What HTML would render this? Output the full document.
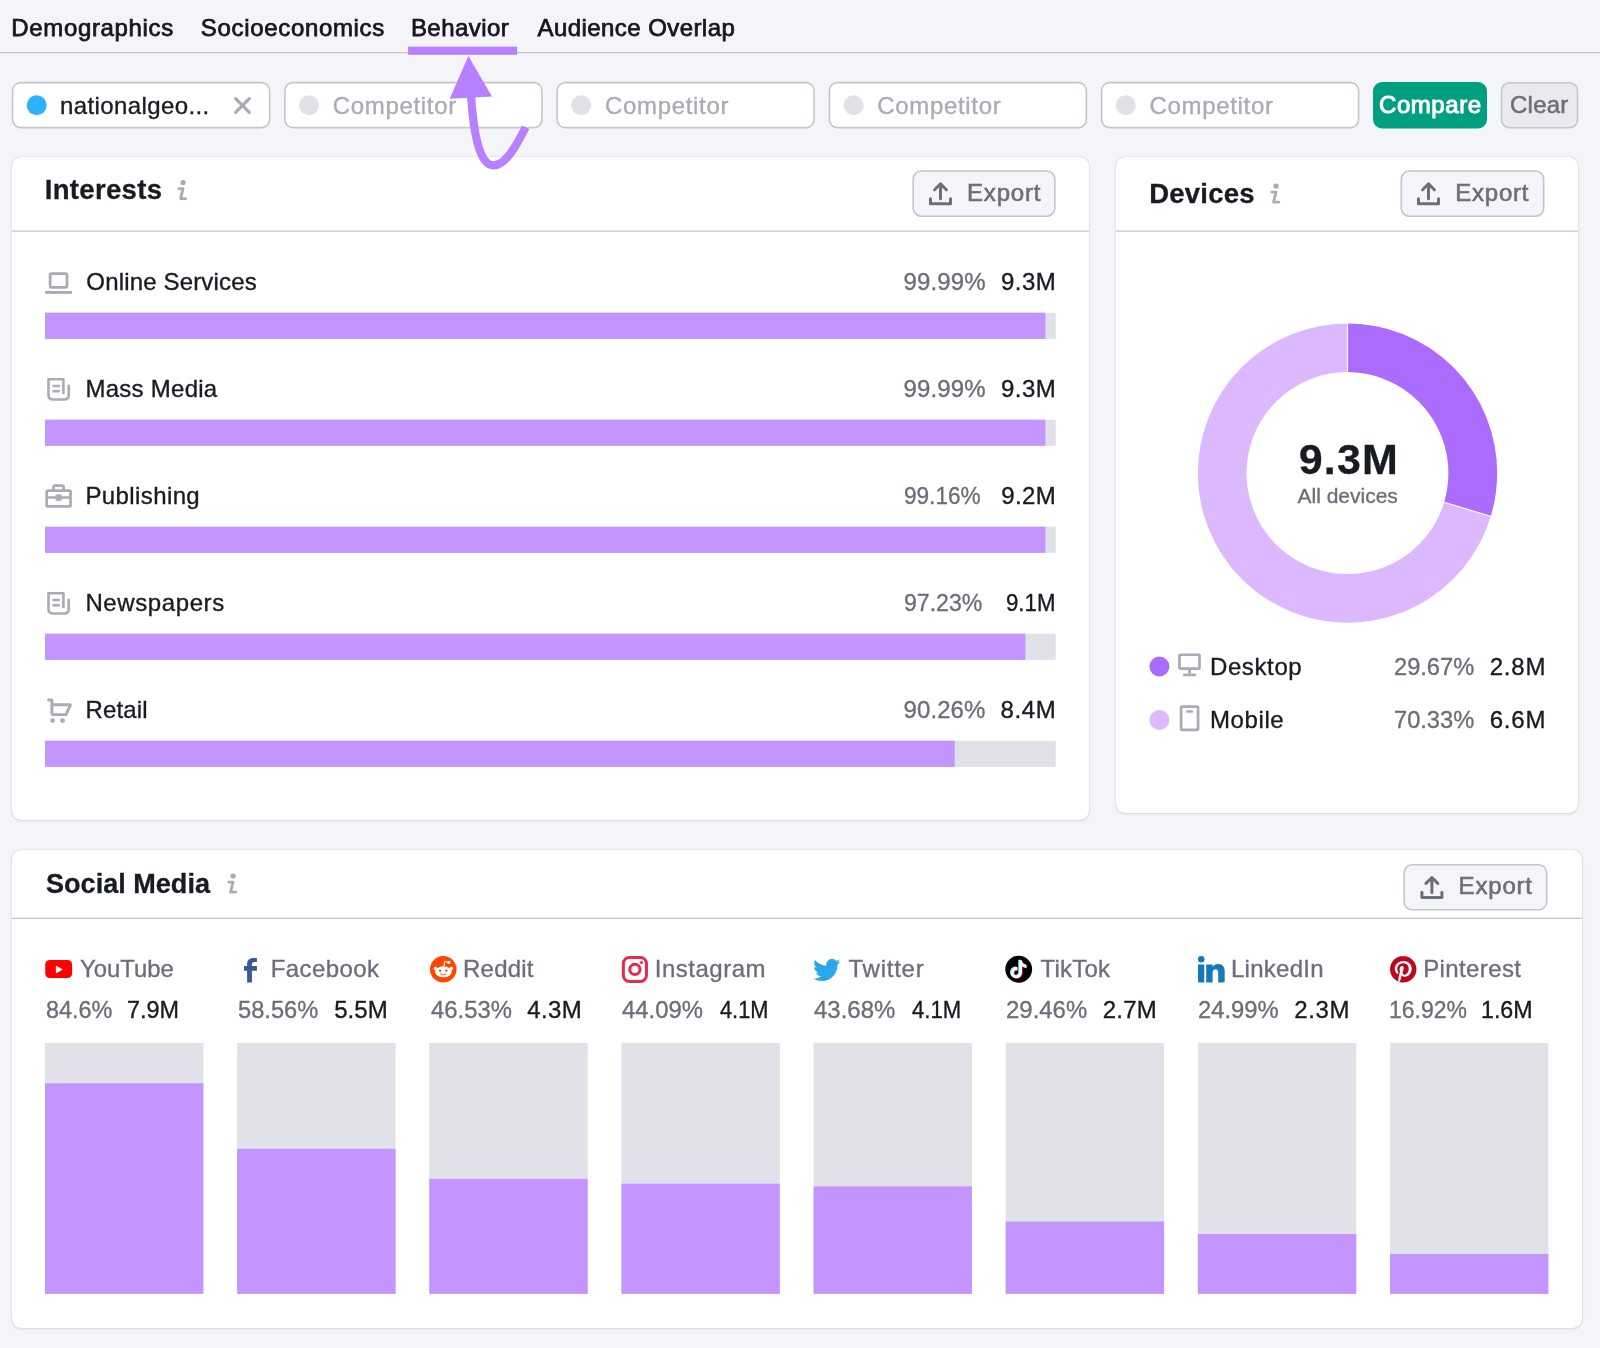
<!DOCTYPE html>
<html lang="en"><head><meta charset="utf-8"><title>Audience Behavior</title>
<style>
html,body{margin:0;padding:0}
body{width:1600px;height:1348px;position:relative;overflow:hidden;background:#f4f5f9;font-family:"Liberation Sans",sans-serif;}
.card{position:absolute;background:#fff;border-radius:9px;box-shadow:0 0 1.5px rgba(25,27,35,.22),0 1px 3px rgba(25,27,35,.10);}
svg{position:absolute;overflow:visible;}
#tx{position:absolute;left:0;top:0;width:1600px;height:1348px;will-change:transform;}
#tx nav,#tx section,#tx div,#tx h2,#tx p{margin:0;padding:0;font:inherit;}
.t{position:absolute;white-space:nowrap;transform-origin:0 50%;}

</style></head>
<body>
<div class="card" style="left:12px;top:157px;width:1077px;height:663px"></div>
<div class="card" style="left:1116px;top:157px;width:462px;height:656px"></div>
<div class="card" style="left:12px;top:850px;width:1570px;height:478px"></div>
<svg width="1600" height="1348" viewBox="0 0 1600 1348" style="left:0;top:0">
<g stroke="#c1c4cd" stroke-width="1.3">
<line x1="0" y1="52.7" x2="1600" y2="52.7"/>
<line x1="12" y1="231.1" x2="1089" y2="231.1"/>
<line x1="1116" y1="231.1" x2="1578" y2="231.1"/>
<line x1="12" y1="918.4" x2="1582" y2="918.4"/>
</g>
<rect x="408.1" y="46.6" width="109" height="8.2" fill="#b880ff"/>
<g fill="#fff" stroke="#c2c5ce" stroke-width="1.55">
<rect x="12.6" y="82.6" width="257" height="45" rx="8"/>
<rect x="284.9" y="82.6" width="257" height="45" rx="8"/>
<rect x="557.1" y="82.6" width="257" height="45" rx="8"/>
<rect x="829.4" y="82.6" width="257" height="45" rx="8"/>
<rect x="1101.6" y="82.6" width="257" height="45" rx="8"/>
</g>
<circle cx="36.7" cy="105.3" r="10" fill="#2bb3ff"/>
<g fill="#e0e1e9">
<circle cx="309" cy="105.3" r="10"/>
<circle cx="581.2" cy="105.3" r="10"/>
<circle cx="853.5" cy="105.3" r="10"/>
<circle cx="1125.7" cy="105.3" r="10"/>
</g>
<rect x="1373" y="82" width="114" height="46.4" rx="9" fill="#009f81"/>
<rect x="1501.5" y="82.7" width="76" height="45" rx="8" fill="#e9eaf0" stroke="#c2c5ce" stroke-width="1.55"/>
<g fill="#f4f5f9" stroke="#c2c5ce" stroke-width="1.55">
<rect x="913.2" y="171" width="141.6" height="45.2" rx="8"/>
<rect x="1401.3" y="171" width="142.4" height="45.2" rx="8"/>
<rect x="1404.15" y="864.8" width="142.5" height="45" rx="8"/>
</g>
</svg>

<svg width="1600" height="1348" viewBox="0 0 1600 1348" style="left:0;top:0">
<rect x="45" y="312.7" width="1010.7" height="26.2" fill="#e0e1e9"/><rect x="45" y="312.7" width="1000.45" height="26.2" fill="#c595ff"/>
<rect x="45" y="419.7" width="1010.7" height="26.2" fill="#e0e1e9"/><rect x="45" y="419.7" width="1000.45" height="26.2" fill="#c595ff"/>
<rect x="45" y="526.7" width="1010.7" height="26.2" fill="#e0e1e9"/><rect x="45" y="526.7" width="1000.45" height="26.2" fill="#c595ff"/>
<rect x="45" y="633.7" width="1010.7" height="26.2" fill="#e0e1e9"/><rect x="45" y="633.7" width="980.35" height="26.2" fill="#c595ff"/>
<rect x="45" y="740.7" width="1010.7" height="26.2" fill="#e0e1e9"/><rect x="45" y="740.7" width="909.75" height="26.2" fill="#c595ff"/>
<rect x="45.00" y="1043" width="158.4" height="250.9" fill="#e0e1e9"/><rect x="45.00" y="1083.25" width="158.4" height="210.65" fill="#c595ff"/>
<rect x="237.14" y="1043" width="158.4" height="250.9" fill="#e0e1e9"/><rect x="237.14" y="1148.75" width="158.4" height="145.15" fill="#c595ff"/>
<rect x="429.28" y="1043" width="158.4" height="250.9" fill="#e0e1e9"/><rect x="429.28" y="1178.9" width="158.4" height="115" fill="#c595ff"/>
<rect x="621.42" y="1043" width="158.4" height="250.9" fill="#e0e1e9"/><rect x="621.42" y="1183.7" width="158.4" height="110.2" fill="#c595ff"/>
<rect x="813.56" y="1043" width="158.4" height="250.9" fill="#e0e1e9"/><rect x="813.56" y="1186.4" width="158.4" height="107.5" fill="#c595ff"/>
<rect x="1005.70" y="1043" width="158.4" height="250.9" fill="#e0e1e9"/><rect x="1005.70" y="1221.5" width="158.4" height="72.4" fill="#c595ff"/>
<rect x="1197.84" y="1043" width="158.4" height="250.9" fill="#e0e1e9"/><rect x="1197.84" y="1234" width="158.4" height="59.9" fill="#c595ff"/>
<rect x="1389.98" y="1043" width="158.4" height="250.9" fill="#e0e1e9"/><rect x="1389.98" y="1254" width="158.4" height="39.9" fill="#c595ff"/>
</svg>
<svg width="1600" height="1348" viewBox="0 0 1600 1348" style="left:0;top:0">
<defs>
<g id="info" fill="none" stroke="#a9abb6" stroke-width="2.8" stroke-linecap="round" stroke-linejoin="round">
<path d="M1.6,8.4 H5.8 L3.4,18.4 H8.6"/><circle cx="5.9" cy="2.4" r="1.3" fill="#a9abb6"/>
</g>
<g id="exp" fill="none" stroke="#6c6e79" stroke-width="3" stroke-linecap="round" stroke-linejoin="round">
<path d="M1.5,16.5 V21.6 H21.5 V16.5"/><path d="M11.5,16.6 V2 M5.6,7.6 L11.5,1.7 L17.4,7.6"/>
</g>
<g id="news" fill="none" stroke="#a9abb6" stroke-width="2.6" stroke-linecap="round" stroke-linejoin="round">
<path d="M63.4,393 V379.3 H48.5 V395 Q48.5,399.45 53,399.45 H64.3 Q68.7,399.45 68.7,395 V385.8"/>
<path d="M53.6,386 H58.8 M53.6,391.2 H58.8"/>
</g>
</defs>

<!-- donut -->
<g transform="translate(1347.5 473.1)">
<circle r="125.3" fill="none" stroke="#dcb8ff" stroke-width="48.6"/>
<circle r="125.3" fill="none" stroke="#ab6cfe" stroke-width="48.6" stroke-dasharray="233.6 787.3" transform="rotate(-90)"/>
<line x1="0" y1="-100" x2="0" y2="-151" stroke="#fff" stroke-width="1.2"/>
<line x1="0" y1="-100" x2="0" y2="-151" stroke="#fff" stroke-width="1.2" transform="rotate(106.8)"/>
</g>

<!-- x icon -->
<path d="M235.6,98.6 L249.3,112.3 M249.3,98.6 L235.6,112.3" stroke="#a9abb6" stroke-width="3.2" stroke-linecap="round" fill="none"/>

<!-- info icons -->
<use href="#info" x="177.2" y="180.2"/>
<use href="#info" x="1270.2" y="183.7"/>
<use href="#info" x="227.2" y="873.7"/>

<!-- export icons -->
<use href="#exp" x="929" y="182.2"/>
<use href="#exp" x="1417" y="182.2"/>
<use href="#exp" x="1420.4" y="875.8"/>

<!-- interest icons -->
<g fill="none" stroke="#a9abb6" stroke-linejoin="round">
<rect x="50.15" y="273.6" width="16.85" height="13.75" rx="1.6" stroke-width="2.8"/>
<rect x="45.1" y="291" width="26.9" height="2.9" fill="#a9abb6" stroke="none"/>
</g>
<use href="#news"/>
<use href="#news" y="214"/>
<g fill="none" stroke="#a9abb6" stroke-width="2.7" stroke-linejoin="round">
<rect x="46.65" y="490.65" width="23.9" height="15.75" rx="1.5"/>
<path d="M53.55,490 V487.2 Q53.55,485.65 55.1,485.65 H62.1 Q63.65,485.65 63.65,487.2 V490"/>
<path d="M46.65,497.5 H70.55" stroke-width="2.5"/>
<rect x="55.3" y="494.3" width="6.6" height="6.6" rx="2.2" fill="#a9abb6" stroke="none"/>
</g>
<g fill="none" stroke="#a9abb6" stroke-width="2.9" stroke-linecap="round" stroke-linejoin="round">
<path d="M48.6,700 H51.85 V713 Q51.85,714.65 53.5,714.65 H66 L70.4,704.8 H52"/>
<circle cx="52.6" cy="720.6" r="2.4" fill="#a9abb6" stroke="none"/>
<circle cx="62.6" cy="720.6" r="2.4" fill="#a9abb6" stroke="none"/>
</g>

<!-- device legend -->
<circle cx="1159.4" cy="666.5" r="10" fill="#ab6cfe"/>
<circle cx="1159.4" cy="720" r="10" fill="#dcb8ff"/>
<g fill="none" stroke="#a9abb6" stroke-width="2.7" stroke-linejoin="round">
<rect x="1179.45" y="654.75" width="20.1" height="13.9" rx="1"/>
<rect x="1188.2" y="670" width="2.8" height="3.6" fill="#a9abb6" stroke="none"/>
<rect x="1183" y="673.5" width="13" height="2.75" rx="1" fill="#a9abb6" stroke="none"/>
<rect x="1181.1" y="706.6" width="16.95" height="23.3" rx="1"/>
<rect x="1186.25" y="710.25" width="6.65" height="2.5" fill="#a9abb6" stroke="none"/>
</g>

<!-- social icons -->
<rect x="45.25" y="960" width="26.85" height="18.1" rx="4.6" fill="#ff0000"/>
<path d="M55.9,965.4 L62.8,969.45 L55.9,973.5 Z" fill="#fff"/>

<path d="M247.1,982.6 V970.8 H244 V966.1 H247.1 V964 C247.1,960.3 249.6,958 253.2,958 H256.9 V961.9 H254.6 C252.8,961.9 251.9,962.8 251.9,964.5 V966.1 H256.9 V970.8 H251.9 V982.6 Z" fill="#3b5998"/>

<g>
<circle cx="443.25" cy="969.25" r="13.25" fill="#ff4500"/>
<path d="M443.9,966 L444.7,961.5 L448.6,962.4" stroke="#fff" stroke-width="1" fill="none" stroke-linecap="round" stroke-linejoin="round"/>
<circle cx="448.9" cy="962.4" r="1.55" fill="#fff"/>
<circle cx="435.5" cy="968.6" r="1.8" fill="#fff"/>
<circle cx="451.3" cy="968.6" r="1.8" fill="#fff"/>
<ellipse cx="443.4" cy="971.8" rx="8.3" ry="5.5" fill="#fff"/>
<circle cx="440.1" cy="970.6" r="1.2" fill="#ff4500"/>
<circle cx="446.3" cy="970.6" r="1.2" fill="#ff4500"/>
<path d="M440.4,974.1 Q443.3,975.6 446.3,974.1" stroke="#ff4500" stroke-width="0.8" fill="none" stroke-linecap="round"/>
</g>

<g fill="none" stroke="#e6294f" stroke-width="3">
<rect x="623.35" y="957.5" width="23.1" height="23.9" rx="6"/>
<circle cx="634.9" cy="969.4" r="5.1" stroke-width="3.1"/>
<circle cx="641.5" cy="962.5" r="1.55" fill="#e6294f" stroke="none"/>
</g>

<path transform="translate(813.1 956.45) scale(1.131)" fill="#2aa7ea" d="M23.953 4.57a10 10 0 01-2.825.775 4.958 4.958 0 002.163-2.723c-.951.555-2.005.959-3.127 1.184a4.92 4.92 0 00-8.384 4.482C7.69 8.095 4.067 6.13 1.64 3.162a4.822 4.822 0 00-.666 2.475c0 1.71.87 3.213 2.188 4.096a4.904 4.904 0 01-2.228-.616v.06a4.923 4.923 0 003.946 4.827 4.996 4.996 0 01-2.212.085 4.936 4.936 0 004.604 3.417 9.867 9.867 0 01-6.102 2.105c-.39 0-.779-.023-1.17-.067a13.995 13.995 0 007.557 2.209c9.053 0 13.998-7.496 13.998-13.985 0-.21 0-.42-.015-.63A9.935 9.935 0 0024 4.59z"/>

<g>
<circle cx="1018.7" cy="969.25" r="13.4" fill="#010101"/>
<path transform="translate(1008.8 959.7) scale(0.75)" fill="#25f4ee" d="M12.525.02c1.31-.02 2.61-.01 3.91-.02.08 1.53.63 3.09 1.75 4.17 1.12 1.11 2.7 1.62 4.24 1.79v4.03c-1.44-.05-2.89-.35-4.2-.97-.57-.26-1.1-.59-1.62-.93-.01 2.92.01 5.84-.02 8.75-.08 1.4-.54 2.79-1.35 3.94-1.31 1.92-3.58 3.17-5.91 3.21-1.43.08-2.86-.31-4.08-1.03-2.02-1.19-3.44-3.37-3.65-5.71-.02-.5-.03-1-.01-1.49.18-1.9 1.12-3.72 2.58-4.96 1.66-1.44 3.98-2.13 6.15-1.72.02 1.48-.04 2.96-.04 4.44-.99-.32-2.15-.23-3.02.37-.63.41-1.11 1.04-1.36 1.75-.21.51-.15 1.07-.14 1.61.24 1.64 1.82 3.02 3.5 2.87 1.12-.01 2.19-.66 2.77-1.61.19-.33.4-.67.41-1.06.1-1.79.06-3.57.07-5.36.01-4.03-.01-8.05.02-12.07z"/>
<path transform="translate(1010.2 960.7) scale(0.75)" fill="#fe2c55" d="M12.525.02c1.31-.02 2.61-.01 3.91-.02.08 1.53.63 3.09 1.75 4.17 1.12 1.11 2.7 1.62 4.24 1.79v4.03c-1.44-.05-2.89-.35-4.2-.97-.57-.26-1.1-.59-1.62-.93-.01 2.92.01 5.84-.02 8.75-.08 1.4-.54 2.79-1.35 3.94-1.31 1.92-3.58 3.17-5.91 3.21-1.43.08-2.86-.31-4.08-1.03-2.02-1.19-3.44-3.37-3.65-5.71-.02-.5-.03-1-.01-1.49.18-1.9 1.12-3.72 2.58-4.96 1.66-1.44 3.98-2.13 6.15-1.72.02 1.48-.04 2.96-.04 4.44-.99-.32-2.15-.23-3.02.37-.63.41-1.11 1.04-1.36 1.75-.21.51-.15 1.07-.14 1.61.24 1.64 1.82 3.02 3.5 2.87 1.12-.01 2.19-.66 2.77-1.61.19-.33.4-.67.41-1.06.1-1.79.06-3.57.07-5.36.01-4.03-.01-8.05.02-12.07z"/>
<path transform="translate(1009.5 960.2) scale(0.75)" fill="#fff" d="M12.525.02c1.31-.02 2.61-.01 3.91-.02.08 1.53.63 3.09 1.75 4.17 1.12 1.11 2.7 1.62 4.24 1.79v4.03c-1.44-.05-2.89-.35-4.2-.97-.57-.26-1.1-.59-1.62-.93-.01 2.92.01 5.84-.02 8.75-.08 1.4-.54 2.79-1.35 3.94-1.31 1.92-3.58 3.17-5.91 3.21-1.43.08-2.86-.31-4.08-1.03-2.02-1.19-3.44-3.37-3.65-5.71-.02-.5-.03-1-.01-1.49.18-1.9 1.12-3.72 2.58-4.96 1.66-1.44 3.98-2.13 6.15-1.72.02 1.48-.04 2.96-.04 4.44-.99-.32-2.15-.23-3.02.37-.63.41-1.11 1.04-1.36 1.75-.21.51-.15 1.07-.14 1.61.24 1.64 1.82 3.02 3.5 2.87 1.12-.01 2.19-.66 2.77-1.61.19-.33.4-.67.41-1.06.1-1.79.06-3.57.07-5.36.01-4.03-.01-8.05.02-12.07z"/>
</g>

<g fill="#157ab9">
<circle cx="1201.2" cy="959.3" r="3.3"/>
<path d="M1198,964.5 h6.3 V982.5 h-4.8 q-1.5,0 -1.5,-1.5 z"/>
<path d="M1206.2,964.5 h6.4 v2.5 c1.1,-1.8 3,-3 5.7,-3 c4.4,0 6.4,2.9 6.4,7.6 V981 q0,1.5 -1.5,1.5 h-5 V973.2 c0,-2.4 -0.7,-3.9 -2.7,-3.9 c-2.2,0 -2.9,1.7 -2.9,3.9 V982.5 h-6.4 z"/>
</g>

<path transform="translate(1390 956) scale(1.104)" fill="#bd081c" d="M12.017 0C5.396 0 .029 5.367.029 11.987c0 5.079 3.158 9.417 7.618 11.162-.105-.949-.199-2.403.041-3.439.219-.937 1.406-5.957 1.406-5.957s-.359-.72-.359-1.781c0-1.663.967-2.911 2.168-2.911 1.024 0 1.518.769 1.518 1.688 0 1.029-.653 2.567-.992 3.992-.285 1.193.6 2.165 1.775 2.165 2.128 0 3.768-2.245 3.768-5.487 0-2.861-2.063-4.869-5.008-4.869-3.41 0-5.409 2.562-5.409 5.199 0 1.033.394 2.143.889 2.741.099.12.112.225.085.345-.09.375-.293 1.199-.334 1.363-.053.225-.172.271-.401.165-1.495-.69-2.433-2.878-2.433-4.646 0-3.776 2.748-7.252 7.92-7.252 4.158 0 7.392 2.967 7.392 6.923 0 4.135-2.607 7.462-6.233 7.462-1.214 0-2.354-.629-2.758-1.379l-.749 2.848c-.269 1.045-1.004 2.352-1.498 3.146 1.123.345 2.306.535 3.55.535 6.607 0 11.985-5.365 11.985-11.987C23.97 5.39 18.592.026 11.985.026L12.017 0z"/>

<!-- annotation arrow -->
<g>
<path d="M471,95 C473,126 478,165.4 493.5,165.4 C505,165.4 516,147 525.6,127.3" fill="none" stroke="#b880ff" stroke-width="8.2"/>
<path d="M468.4,56.1 L449.7,98.7 L492,96.6 Z" fill="#b880ff"/>
</g>
</svg>

<div id="tx">
<nav>
<span class="t" style="left:11.28px;top:13.00px;font-size:24px;line-height:29px;letter-spacing:0.661px;color:#15171e;-webkit-text-stroke:0.75px #15171e;">Demographics</span>
<span class="t" style="left:200.80px;top:13.00px;font-size:24px;line-height:29px;letter-spacing:0.673px;color:#15171e;-webkit-text-stroke:0.75px #15171e;">Socioeconomics</span>
<span class="t" style="left:410.93px;top:13.00px;font-size:24px;line-height:29px;letter-spacing:0.432px;color:#15171e;-webkit-text-stroke:0.75px #15171e;">Behavior</span>
<span class="t" style="left:537.57px;top:13.00px;font-size:24px;line-height:29px;letter-spacing:0.427px;color:#15171e;-webkit-text-stroke:0.75px #15171e;">Audience Overlap</span>
</nav>
<div>
<span class="t" style="left:60.10px;top:91.00px;font-size:24px;line-height:29px;letter-spacing:0.379px;color:#191b23;-webkit-text-stroke:0.35px #191b23;">nationalgeo...</span>
<span class="t" style="left:332.73px;top:91.00px;font-size:24px;line-height:29px;letter-spacing:0.672px;color:#a9abb6;-webkit-text-stroke:0.35px #a9abb6;">Competitor</span>
<span class="t" style="left:604.98px;top:91.00px;font-size:24px;line-height:29px;letter-spacing:0.672px;color:#a9abb6;-webkit-text-stroke:0.35px #a9abb6;">Competitor</span>
<span class="t" style="left:877.23px;top:91.00px;font-size:24px;line-height:29px;letter-spacing:0.672px;color:#a9abb6;-webkit-text-stroke:0.35px #a9abb6;">Competitor</span>
<span class="t" style="left:1149.47px;top:91.00px;font-size:24px;line-height:29px;letter-spacing:0.672px;color:#a9abb6;-webkit-text-stroke:0.35px #a9abb6;">Competitor</span>
<span class="t" style="left:1379.05px;top:90.00px;font-size:24px;line-height:29px;letter-spacing:0.546px;color:#ffffff;-webkit-text-stroke:1px #ffffff;">Compare</span>
<span class="t" style="left:1510.08px;top:90.00px;font-size:24px;line-height:29px;letter-spacing:0.212px;color:#6c6e79;-webkit-text-stroke:0.55px #6c6e79;">Clear</span>
</div>
<section>
<span class="t" style="left:44.78px;top:173.00px;font-size:27.5px;line-height:33px;letter-spacing:0.322px;color:#191b23;font-weight:700;-webkit-text-stroke:0.3px #191b23;">Interests</span>
<span class="t" style="left:967.10px;top:178.00px;font-size:24px;line-height:29px;letter-spacing:0.770px;color:#6c6e79;-webkit-text-stroke:0.6px #6c6e79;">Export</span>
<span class="t" style="left:86.30px;top:267.00px;font-size:24px;line-height:29px;letter-spacing:0.163px;color:#191b23;-webkit-text-stroke:0.35px #191b23;">Online Services</span>
<span class="t" style="left:903.60px;top:267.00px;font-size:24px;line-height:29px;letter-spacing:0.135px;color:#6c6e79;-webkit-text-stroke:0.35px #6c6e79;">99.99%</span>
<span class="t" style="left:1001.05px;top:267.00px;font-size:24px;line-height:29px;letter-spacing:0.467px;color:#191b23;-webkit-text-stroke:0.35px #191b23;">9.3M</span>
<span class="t" style="left:85.42px;top:374.00px;font-size:24px;line-height:29px;letter-spacing:0.269px;color:#191b23;-webkit-text-stroke:0.35px #191b23;">Mass Media</span>
<span class="t" style="left:903.60px;top:374.00px;font-size:24px;line-height:29px;letter-spacing:0.135px;color:#6c6e79;-webkit-text-stroke:0.35px #6c6e79;">99.99%</span>
<span class="t" style="left:1001.05px;top:374.00px;font-size:24px;line-height:29px;letter-spacing:0.467px;color:#191b23;-webkit-text-stroke:0.35px #191b23;">9.3M</span>
<span class="t" style="left:85.42px;top:481.00px;font-size:24px;line-height:29px;letter-spacing:0.397px;color:#191b23;-webkit-text-stroke:0.35px #191b23;">Publishing</span>
<span class="t" style="left:903.67px;top:481.00px;font-size:24px;line-height:29px;letter-spacing:0.000px;color:#6c6e79;transform:scaleX(0.9411);-webkit-text-stroke:0.35px #6c6e79;">99.16%</span>
<span class="t" style="left:1001.15px;top:481.00px;font-size:24px;line-height:29px;letter-spacing:0.433px;color:#191b23;-webkit-text-stroke:0.35px #191b23;">9.2M</span>
<span class="t" style="left:85.42px;top:588.00px;font-size:24px;line-height:29px;letter-spacing:0.600px;color:#191b23;-webkit-text-stroke:0.35px #191b23;">Newspapers</span>
<span class="t" style="left:903.64px;top:588.00px;font-size:24px;line-height:29px;letter-spacing:0.000px;color:#6c6e79;transform:scaleX(0.9625);-webkit-text-stroke:0.35px #6c6e79;">97.23%</span>
<span class="t" style="left:1006.23px;top:588.00px;font-size:24px;line-height:29px;letter-spacing:0.000px;color:#191b23;transform:scaleX(0.9264);-webkit-text-stroke:0.35px #191b23;">9.1M</span>
<span class="t" style="left:85.42px;top:695.00px;font-size:24px;line-height:29px;letter-spacing:0.170px;color:#191b23;-webkit-text-stroke:0.35px #191b23;">Retail</span>
<span class="t" style="left:903.60px;top:695.00px;font-size:24px;line-height:29px;letter-spacing:0.065px;color:#6c6e79;-webkit-text-stroke:0.35px #6c6e79;">90.26%</span>
<span class="t" style="left:1000.48px;top:695.00px;font-size:24px;line-height:29px;letter-spacing:0.658px;color:#191b23;-webkit-text-stroke:0.35px #191b23;">8.4M</span>
</section>
<section>
<span class="t" style="left:1149.17px;top:177.00px;font-size:27.5px;line-height:33px;letter-spacing:0.237px;color:#191b23;font-weight:700;-webkit-text-stroke:0.3px #191b23;">Devices</span>
<span class="t" style="left:1455.35px;top:178.00px;font-size:24px;line-height:29px;letter-spacing:0.760px;color:#6c6e79;-webkit-text-stroke:0.6px #6c6e79;">Export</span>
<span class="t" style="left:1298.65px;top:433.00px;font-size:43px;line-height:52px;letter-spacing:1.217px;color:#191b23;font-weight:700;-webkit-text-stroke:0.3px #191b23;">9.3M</span>
<span class="t" style="left:1297.47px;top:483.00px;font-size:21px;line-height:25px;letter-spacing:0.003px;color:#6c6e79;-webkit-text-stroke:0.35px #6c6e79;">All devices</span>
<span class="t" style="left:1209.97px;top:652.00px;font-size:24px;line-height:29px;letter-spacing:0.613px;color:#191b23;-webkit-text-stroke:0.35px #191b23;">Desktop</span>
<span class="t" style="left:1394.24px;top:652.00px;font-size:24px;line-height:29px;letter-spacing:0.000px;color:#6c6e79;transform:scaleX(0.9849);-webkit-text-stroke:0.35px #6c6e79;">29.67%</span>
<span class="t" style="left:1489.72px;top:652.00px;font-size:24px;line-height:29px;letter-spacing:0.808px;color:#191b23;-webkit-text-stroke:0.35px #191b23;">2.8M</span>
<span class="t" style="left:1209.97px;top:705.00px;font-size:24px;line-height:29px;letter-spacing:0.605px;color:#191b23;-webkit-text-stroke:0.35px #191b23;">Mobile</span>
<span class="t" style="left:1394.24px;top:705.00px;font-size:24px;line-height:29px;letter-spacing:0.000px;color:#6c6e79;transform:scaleX(0.9849);-webkit-text-stroke:0.35px #6c6e79;">70.33%</span>
<span class="t" style="left:1489.72px;top:705.00px;font-size:24px;line-height:29px;letter-spacing:0.808px;color:#191b23;-webkit-text-stroke:0.35px #191b23;">6.6M</span>
</section>
<section>
<span class="t" style="left:46.01px;top:867.00px;font-size:27.5px;line-height:33px;letter-spacing:0.000px;color:#191b23;font-weight:700;transform:scaleX(0.9843);-webkit-text-stroke:0.3px #191b23;">Social Media</span>
<span class="t" style="left:1458.60px;top:871.00px;font-size:24px;line-height:29px;letter-spacing:0.810px;color:#6c6e79;-webkit-text-stroke:0.6px #6c6e79;">Export</span>
<span class="t" style="left:79.98px;top:954.00px;font-size:24px;line-height:29px;letter-spacing:0.000px;color:#6c6e79;transform:scaleX(0.9935);-webkit-text-stroke:0.35px #6c6e79;">YouTube</span>
<span class="t" style="left:45.75px;top:995.00px;font-size:24px;line-height:29px;letter-spacing:0.000px;color:#6c6e79;transform:scaleX(0.9766);-webkit-text-stroke:0.35px #6c6e79;">84.6%</span>
<span class="t" style="left:127.36px;top:995.00px;font-size:24px;line-height:29px;letter-spacing:0.000px;color:#191b23;transform:scaleX(0.9746);-webkit-text-stroke:0.35px #191b23;">7.9M</span>
<span class="t" style="left:270.73px;top:954.00px;font-size:24px;line-height:29px;letter-spacing:0.404px;color:#6c6e79;-webkit-text-stroke:0.35px #6c6e79;">Facebook</span>
<span class="t" style="left:238.24px;top:995.00px;font-size:24px;line-height:29px;letter-spacing:0.000px;color:#6c6e79;transform:scaleX(0.9862);-webkit-text-stroke:0.35px #6c6e79;">58.56%</span>
<span class="t" style="left:334.23px;top:995.00px;font-size:24px;line-height:29px;letter-spacing:0.058px;color:#191b23;-webkit-text-stroke:0.35px #191b23;">5.5M</span>
<span class="t" style="left:463.08px;top:954.00px;font-size:24px;line-height:29px;letter-spacing:0.190px;color:#6c6e79;-webkit-text-stroke:0.35px #6c6e79;">Reddit</span>
<span class="t" style="left:430.58px;top:995.00px;font-size:24px;line-height:29px;letter-spacing:0.000px;color:#6c6e79;transform:scaleX(0.9931);-webkit-text-stroke:0.35px #6c6e79;">46.53%</span>
<span class="t" style="left:527.23px;top:995.00px;font-size:24px;line-height:29px;letter-spacing:0.392px;color:#191b23;-webkit-text-stroke:0.35px #191b23;">4.3M</span>
<span class="t" style="left:654.73px;top:954.00px;font-size:24px;line-height:29px;letter-spacing:0.509px;color:#6c6e79;-webkit-text-stroke:0.35px #6c6e79;">Instagram</span>
<span class="t" style="left:622.48px;top:995.00px;font-size:24px;line-height:29px;letter-spacing:0.000px;color:#6c6e79;transform:scaleX(0.9956);-webkit-text-stroke:0.35px #6c6e79;">44.09%</span>
<span class="t" style="left:719.77px;top:995.00px;font-size:24px;line-height:29px;letter-spacing:0.000px;color:#191b23;transform:scaleX(0.9081);-webkit-text-stroke:0.35px #191b23;">4.1M</span>
<span class="t" style="left:848.48px;top:954.00px;font-size:24px;line-height:29px;letter-spacing:0.758px;color:#6c6e79;-webkit-text-stroke:0.35px #6c6e79;">Twitter</span>
<span class="t" style="left:814.38px;top:995.00px;font-size:24px;line-height:29px;letter-spacing:0.000px;color:#6c6e79;transform:scaleX(0.9987);-webkit-text-stroke:0.35px #6c6e79;">43.68%</span>
<span class="t" style="left:911.61px;top:995.00px;font-size:24px;line-height:29px;letter-spacing:0.000px;color:#191b23;transform:scaleX(0.9209);-webkit-text-stroke:0.35px #191b23;">4.1M</span>
<span class="t" style="left:1040.38px;top:954.00px;font-size:24px;line-height:29px;letter-spacing:0.250px;color:#6c6e79;-webkit-text-stroke:0.35px #6c6e79;">TikTok</span>
<span class="t" style="left:1006.13px;top:995.00px;font-size:24px;line-height:29px;letter-spacing:0.000px;color:#6c6e79;transform:scaleX(0.9975);-webkit-text-stroke:0.35px #6c6e79;">29.46%</span>
<span class="t" style="left:1102.72px;top:995.00px;font-size:24px;line-height:29px;letter-spacing:0.225px;color:#191b23;-webkit-text-stroke:0.35px #191b23;">2.7M</span>
<span class="t" style="left:1230.97px;top:954.00px;font-size:24px;line-height:29px;letter-spacing:0.275px;color:#6c6e79;-webkit-text-stroke:0.35px #6c6e79;">LinkedIn</span>
<span class="t" style="left:1197.99px;top:995.00px;font-size:24px;line-height:29px;letter-spacing:0.000px;color:#6c6e79;transform:scaleX(0.9893);-webkit-text-stroke:0.35px #6c6e79;">24.99%</span>
<span class="t" style="left:1294.22px;top:995.00px;font-size:24px;line-height:29px;letter-spacing:0.675px;color:#191b23;-webkit-text-stroke:0.35px #191b23;">2.3M</span>
<span class="t" style="left:1423.22px;top:954.00px;font-size:24px;line-height:29px;letter-spacing:0.381px;color:#6c6e79;-webkit-text-stroke:0.35px #6c6e79;">Pinterest</span>
<span class="t" style="left:1389.28px;top:995.00px;font-size:24px;line-height:29px;letter-spacing:0.000px;color:#6c6e79;transform:scaleX(0.9583);-webkit-text-stroke:0.35px #6c6e79;">16.92%</span>
<span class="t" style="left:1481.41px;top:995.00px;font-size:24px;line-height:29px;letter-spacing:0.000px;color:#191b23;transform:scaleX(0.9677);-webkit-text-stroke:0.35px #191b23;">1.6M</span>
</section>
</div>
</body></html>
